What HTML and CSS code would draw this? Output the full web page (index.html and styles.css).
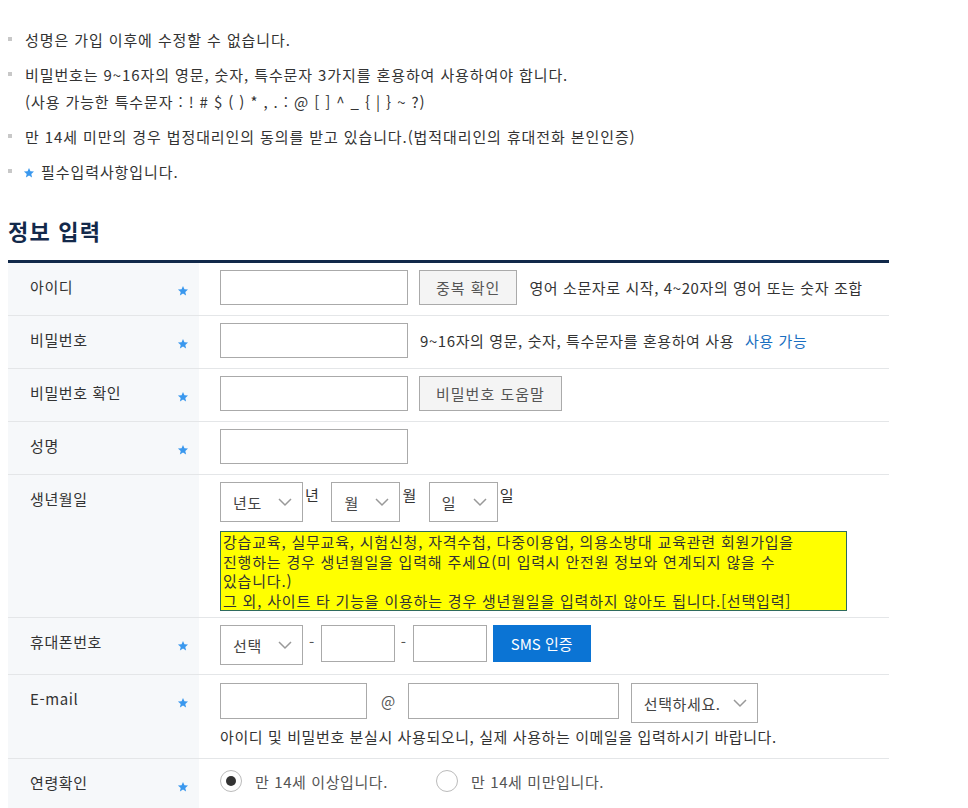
FILE: index.html
```html
<!DOCTYPE html>
<html lang="ko">
<head>
    <meta charset="UTF-8">
    <meta name="viewport" content="width=device-width, initial-scale=1.0">
    <title>회원가입 - 정보 입력</title>
    <link rel="stylesheet" href="styles.css">
</head>
<body>

<div class="wrap">
    <ul class="notice">
        <li>성명은 가입 이후에 수정할 수 없습니다.</li>
        <li>비밀번호는 9~16자의 영문, 숫자, 특수문자 3가지를 혼용하여 사용하여야 합니다.<br>(사용 가능한 특수문자 : ! # $ ( ) * , . : @ [ ] ^ _ { | } ~ ?)</li>
        <li>만 14세 미만의 경우 법정대리인의 동의를 받고 있습니다.(법적대리인의 휴대전화 본인인증)</li>
        <li><svg class="star" viewBox="0 0 24 24"><path d="M12 2l2.9 6.6 7.1.6-5.4 4.7 1.6 7-6.2-3.7-6.2 3.7 1.6-7L1.9 9.2l7.2-.6z"/></svg> 필수입력사항입니다.</li>
    </ul>

    <h2 class="title">정보 입력</h2>

    <table class="form-table">
        <tr>
            <th><span>아이디</span><svg class="star" viewBox="0 0 24 24"><path d="M12 2l2.9 6.6 7.1.6-5.4 4.7 1.6 7-6.2-3.7-6.2 3.7 1.6-7L1.9 9.2l7.2-.6z"/></svg></th>
            <td>
                <div class="line">
                    <input type="text" class="inp w188">
                    <button class="btn-gray">중복 확인</button>
                    <span class="desc">영어 소문자로 시작, 4~20자의 영어 또는 숫자 조합</span>
                </div>
            </td>
        </tr>
        <tr>
            <th><span>비밀번호</span><svg class="star" viewBox="0 0 24 24"><path d="M12 2l2.9 6.6 7.1.6-5.4 4.7 1.6 7-6.2-3.7-6.2 3.7 1.6-7L1.9 9.2l7.2-.6z"/></svg></th>
            <td>
                <div class="line">
                    <input type="password" class="inp w188">
                    <span class="desc">9~16자의 영문, 숫자, 특수문자를 혼용하여 사용 <em class="ok">사용 가능</em></span>
                </div>
            </td>
        </tr>
        <tr>
            <th><span>비밀번호 확인</span><svg class="star" viewBox="0 0 24 24"><path d="M12 2l2.9 6.6 7.1.6-5.4 4.7 1.6 7-6.2-3.7-6.2 3.7 1.6-7L1.9 9.2l7.2-.6z"/></svg></th>
            <td>
                <div class="line">
                    <input type="password" class="inp w188">
                    <button class="btn-gray">비밀번호 도움말</button>
                </div>
            </td>
        </tr>
        <tr>
            <th><span>성명</span><svg class="star" viewBox="0 0 24 24"><path d="M12 2l2.9 6.6 7.1.6-5.4 4.7 1.6 7-6.2-3.7-6.2 3.7 1.6-7L1.9 9.2l7.2-.6z"/></svg></th>
            <td>
                <div class="line">
                    <input type="text" class="inp w188">
                </div>
            </td>
        </tr>
        <tr>
            <th><span>생년월일</span></th>
            <td class="birth">
                <div class="line top">
                    <span class="sel w83"><select><option>년도</option></select><svg viewBox="0 0 16 10"><path d="M2 2l6 6 6-6"/></svg></span>
                    <span class="unit">년</span>
                    <span class="sel w69"><select><option>월</option></select><svg viewBox="0 0 16 10"><path d="M2 2l6 6 6-6"/></svg></span>
                    <span class="unit">월</span>
                    <span class="sel w69"><select><option>일</option></select><svg viewBox="0 0 16 10"><path d="M2 2l6 6 6-6"/></svg></span>
                    <span class="unit">일</span>
                </div>
                <p class="yellow-box">강습교육, 실무교육, 시험신청, 자격수첩, 다중이용업, 의용소방대 교육관련 회원가입을<br>진행하는 경우 생년월일을 입력해 주세요(미 입력시 안전원 정보와 연계되지 않을 수<br>있습니다.)<br>그 외, 사이트 타 기능을 이용하는 경우 생년월일을 입력하지 않아도 됩니다.[선택입력]</p>
            </td>
        </tr>
        <tr>
            <th><span>휴대폰번호</span><svg class="star" viewBox="0 0 24 24"><path d="M12 2l2.9 6.6 7.1.6-5.4 4.7 1.6 7-6.2-3.7-6.2 3.7 1.6-7L1.9 9.2l7.2-.6z"/></svg></th>
            <td class="phone">
                <div class="line top">
                    <span class="sel w83"><select><option>선택</option></select><svg viewBox="0 0 16 10"><path d="M2 2l6 6 6-6"/></svg></span>
                    <span class="dash">-</span>
                    <input type="text" class="inp w74">
                    <span class="dash">-</span>
                    <input type="text" class="inp w74">
                    <button class="btn-blue">SMS 인증</button>
                </div>
            </td>
        </tr>
        <tr>
            <th><span>E-mail</span><svg class="star" viewBox="0 0 24 24"><path d="M12 2l2.9 6.6 7.1.6-5.4 4.7 1.6 7-6.2-3.7-6.2 3.7 1.6-7L1.9 9.2l7.2-.6z"/></svg></th>
            <td class="email">
                <div class="line top">
                    <input type="text" class="inp w147">
                    <span class="at">@</span>
                    <input type="text" class="inp w211">
                    <span class="sel w127"><select><option>선택하세요.</option></select><svg viewBox="0 0 16 10"><path d="M2 2l6 6 6-6"/></svg></span>
                </div>
                <p class="help">아이디 및 비밀번호 분실시 사용되오니, 실제 사용하는 이메일을 입력하시기 바랍니다.</p>
            </td>
        </tr>
        <tr>
            <th><span>연령확인</span><svg class="star" viewBox="0 0 24 24"><path d="M12 2l2.9 6.6 7.1.6-5.4 4.7 1.6 7-6.2-3.7-6.2 3.7 1.6-7L1.9 9.2l7.2-.6z"/></svg></th>
            <td class="age">
                <div class="line">
                    <label class="radio"><input type="radio" name="age" checked> 만 14세 이상입니다.</label>
                    <label class="radio"><input type="radio" name="age"> 만 14세 미만입니다.</label>
                </div>
            </td>
        </tr>
    </table>
</div>

</body>
</html>
```

FILE: styles.css
```css
/* Global */
* {
    margin: 0;
    padding: 0;
    box-sizing: border-box;
}

body {
    font-family: "Noto Sans CJK KR", "Noto Sans", sans-serif;
    font-size: 15px;
    letter-spacing: 0.6px;
    color: #333;
    background: #fff;
}

.wrap {
    padding: 26px 8px 0;
    width: 897px;
}

/* Notice list */
.notice {
    list-style: none;
}

.notice li {
    position: relative;
    padding-left: 17px;
    line-height: 27px;
    margin-bottom: 8px;
    letter-spacing: 0.9px;
    color: #333;
}

.notice li::before {
    content: "";
    position: absolute;
    left: 0;
    top: 11px;
    width: 4px;
    height: 4px;
    background: #c8c8c8;
}

.notice .star {
    vertical-align: -1px;
    margin-right: 1px;
    margin-left: -2px;
}

.star {
    width: 12px;
    height: 12px;
    fill: #3a98ee;
}

/* Title */
.title {
    font-size: 22px;
    font-weight: bold;
    letter-spacing: 1.2px;
    color: #13294b;
    margin-top: 30px;
    margin-bottom: 15px;
    line-height: 30px;
}

/* Form table */
.form-table {
    width: 881px;
    border-collapse: collapse;
    border-top: 3px solid #11294a;
}

.form-table th {
    width: 191px;
    background: #f6f8fa;
    font-weight: normal;
    text-align: left;
    vertical-align: top;
    padding: 14px 10px 0 22px;
    border-bottom: 1px solid #e4e6e8;
    line-height: 20px;
}

.form-table th span {
    display: inline-block;
    width: 147px;
    vertical-align: top;
}

.form-table th .star {
    vertical-align: top;
    margin-top: 8px;
}

.form-table td {
    padding: 7px 0 10px 21px;
    border-bottom: 1px solid #e4e6e8;
    vertical-align: top;
}

.line {
    display: flex;
    align-items: center;
    height: 35px;
}

.line.top {
    align-items: flex-start;
    height: auto;
}

.inp {
    height: 35px;
    border: 1px solid #aaa;
    background: #fff;
    font-family: inherit;
    font-size: 15px;
    padding: 0 8px;
}

.w188 { width: 188px; }
.w74 { width: 74px; }
.w147 { width: 147px; }
.w211 { width: 211px; }

.btn-gray {
    height: 35px;
    margin-left: 11px;
    padding: 0 16px;
    border: 1px solid #aaa;
    background: #f4f4f4;
    color: #555;
    font-family: inherit;
    font-size: 15px;
    letter-spacing: 1px;
}

.desc {
    margin-left: 12px;
    color: #333;
}

.ok {
    font-style: normal;
    color: #1a6fc1;
    margin-left: 6px;
}

/* Select box */
.sel {
    position: relative;
    display: inline-block;
    height: 40px;
}

.sel select {
    appearance: none;
    -webkit-appearance: none;
    width: 100%;
    height: 100%;
    border: 1px solid #aaa;
    background: #fff;
    font-family: inherit;
    font-size: 15px;
    letter-spacing: 0.6px;
    color: #444;
    padding: 0 12px;
}

.sel svg {
    position: absolute;
    right: 10px;
    top: 15px;
    width: 16px;
    height: 10px;
    fill: none;
    stroke: #999;
    stroke-width: 1.5;
    pointer-events: none;
}

.w83 { width: 83px; }
.w69 { width: 69px; }
.w127 { width: 127px; }

.unit {
    margin: 0 12px 0 2px;
    line-height: 26px;
}

td.birth {
    padding-bottom: 6px;
}

.yellow-box {
    margin-top: 9px;
    width: 627px;
    background: #ffff00;
    border: 1px solid #2e6b5e;
    padding: 0 2px;
    font-size: 15px;
    letter-spacing: 0.8px;
    line-height: 19.5px;
    color: #333;
}

.dash {
    margin: 0 6px;
    line-height: 34px;
    color: #555;
}

td.phone {
    padding-bottom: 9px;
}

.phone .inp {
    height: 37px;
}

.btn-blue {
    height: 37px;
    margin-left: 6px;
    width: 98px;
    border: none;
    background: #0b74d4;
    color: #fff;
    font-family: inherit;
    font-size: 15px;
}

td.email {
    padding-top: 8px;
    padding-bottom: 9px;
}

.email .inp {
    height: 36px;
}

.at {
    margin: 0 12px 0 14px;
    line-height: 36px;
    color: #555;
}

.email .sel {
    height: 40px;
    margin-left: 12px;
}

.help {
    margin-top: 4px;
    line-height: 20px;
    padding-bottom: 2px;
}

/* Radio */
td.age {
    padding-bottom: 24px;
}

td.age .line {
    height: 30px;
}

.radio {
    display: inline-flex;
    align-items: center;
    margin-right: 48px;
    color: #555;
}

.radio input {
    appearance: none;
    -webkit-appearance: none;
    width: 22px;
    height: 22px;
    border: 1px solid #bbb;
    border-radius: 50%;
    margin-right: 13px;
    background: #fff;
    position: relative;
}

.radio input:checked::after {
    content: "";
    position: absolute;
    left: 5px;
    top: 5px;
    width: 10px;
    height: 10px;
    border-radius: 50%;
    background: #333;
}
```
